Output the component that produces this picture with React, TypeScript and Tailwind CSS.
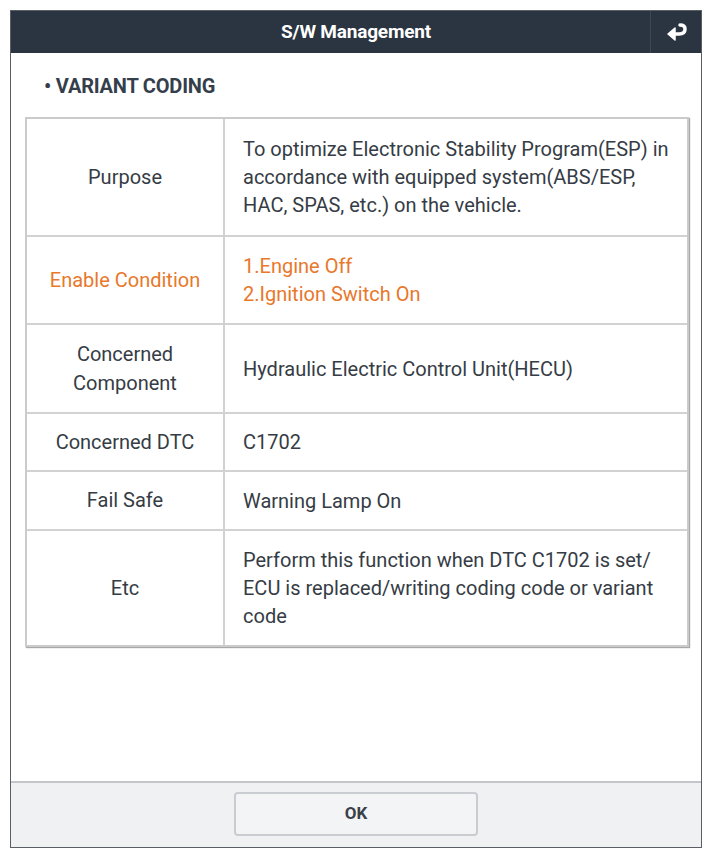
const rows = [
  {
    label: ["Purpose"],
    value: [
      "To optimize Electronic Stability Program(ESP) in",
      "accordance with equipped system(ABS/ESP,",
      "HAC, SPAS, etc.) on the vehicle.",
    ],
    h: "h-[116px]",
  },
  { label: ["Enable Condition"], value: ["1.Engine Off", "2.Ignition Switch On"], h: "h-[88px]", orange: true },
  { label: ["Concerned", "Component"], value: ["Hydraulic Electric Control Unit(HECU)"], h: "h-[89px]" },
  { label: ["Concerned DTC"], value: ["C1702"], h: "h-[58px]" },
  { label: ["Fail Safe"], value: ["Warning Lamp On"], h: "h-[59px]" },
  {
    label: ["Etc"],
    value: [
      "Perform this function when DTC C1702 is set/",
      "ECU is replaced/writing coding code or variant",
      "code",
    ],
    h: "h-[116px]",
  },
]

function ReturnIcon() {
  return (
    <svg width="22" height="20" viewBox="0 0 22 20">
      <path d="M15 3 C19 3 20 5 20 7 C20 10 18 12 14 12 H9" fill="none" stroke="white" strokeWidth="3.5" strokeLinecap="round" />
      <path d="M10 6 L3 12 L10 18 Z" fill="white" stroke="white" strokeWidth="1.5" strokeLinejoin="round" />
    </svg>
  )
}

export default function App() {
  return (
    <div className="h-[858px] w-[712px] bg-white pl-[10px] pt-[10px] font-['Roboto',sans-serif]">
      <div className="flex h-[838px] w-[692px] flex-col border border-[#5a5f66] bg-white">
        {/* header */}
        <div className="relative flex h-[42px] items-center justify-center bg-[#2b3541]">
          <span className="text-[19px] font-bold tracking-[-0.2px] text-white">S/W Management</span>
          <div className="absolute right-0 top-0 flex h-full w-[51px] items-center justify-center border-l border-[#3e4855]">
            <ReturnIcon />
          </div>
        </div>

        {/* body */}
        <div className="flex-1 px-[14px]">
          <p className="pl-[19px] pt-[19px] text-[20px] font-bold leading-[28px] tracking-[-0.2px] text-[#353e4b]">• VARIANT CODING</p>
          <div className="mt-[17px] w-[664px] border-2 border-[#cbcbcb] shadow-[1px_1px_1px_#a8a8a8]">
            {rows.map((r, i) => (
              <div key={i} className={`flex ${r.h} ${i > 0 ? "border-t-2 border-[#d2d2d2]" : ""}`}>
                <div
                  className={`flex w-[198px] flex-col items-center justify-center border-r-2 border-[#d2d2d2] text-center text-[20px] leading-[29px] ${
                    r.orange ? "text-[#e8782b]" : "text-[#363c45]"
                  }`}
                >
                  {r.label.map((l) => (
                    <span key={l}>{l}</span>
                  ))}
                </div>
                <div
                  className={`flex flex-1 flex-col justify-center pl-[18px] text-[20px] leading-[28px] ${
                    r.orange ? "text-[#e8782b]" : "text-[#363c45]"
                  }`}
                >
                  {r.value.map((v) => (
                    <span key={v} className="whitespace-nowrap">{v}</span>
                  ))}
                </div>
              </div>
            ))}
          </div>
        </div>

        {/* footer */}
        <div className="flex h-[66px] items-start justify-center border-t-2 border-[#c3c6cb] bg-[#f0f1f3] pt-[9px]">
          <button className="h-[44px] w-[244px] rounded-[4px] border-2 border-[#c9ccd0] bg-[#f3f4f6] text-[17px] font-bold text-[#3b4048]">
            OK
          </button>
        </div>
      </div>
    </div>
  )
}
